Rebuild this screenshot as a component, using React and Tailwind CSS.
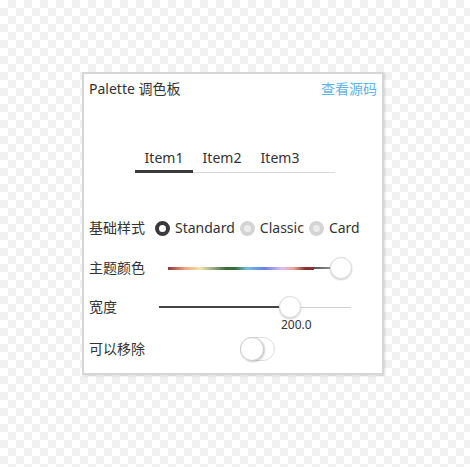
const FONT = { fontFamily: '"Noto Sans", "Noto Sans CJK SC", sans-serif' };

function Radio({ checked, label }) {
    return (
        <label className="flex items-center gap-[5px]">
            {checked ? (
                <span className="h-[15px] w-[15px] rounded-full border-[4px] border-[#3a3a3a] bg-white" />
            ) : (
                <span className="h-[15px] w-[15px] rounded-full border-[4px] border-[#d4d4d4] bg-[#ececec]" />
            )}
            <span>{label}</span>
        </label>
    );
}

export default function App() {
    return (
        <div
            className="h-[467px] w-[470px] bg-white bg-[length:16px_16px] pl-[82px] pt-[72px] text-[14px] text-[#333]"
            style={{
                ...FONT,
                backgroundImage:
                    "linear-gradient(45deg,#f1f1f1 25%,transparent 25%,transparent 75%,#f1f1f1 75%),linear-gradient(45deg,#f1f1f1 25%,transparent 25%,transparent 75%,#f1f1f1 75%)",
                backgroundPosition: "0 0, 8px 8px",
            }}
        >
            <div className="h-[303px] w-[302px] border-2 border-[#d6d6d6] bg-white shadow-[1px_1px_2px_rgba(0,0,0,0.15)]">
                <div className="flex items-center justify-between px-[5px] pt-[5px] leading-[20px]">
                    <span>Palette 调色板</span>
                    <span className="text-[#5fb4ea]">查看源码</span>
                </div>

                <div className="mt-[49px] ml-[51px] w-[200px] border-b border-[#d8d8d8]">
                    <div className="flex">
                        <div className="w-[58px] pb-[2px] text-center leading-[20px]">Item1</div>
                        <div className="w-[58px] pb-[2px] text-center leading-[20px]">Item2</div>
                        <div className="w-[58px] pb-[2px] text-center leading-[20px]">Item3</div>
                    </div>
                    <div className="-mb-px h-[3px] w-[58px] bg-[#3a3a3a]" />
                </div>

                <div className="mt-[45px] flex items-center gap-[10px] px-[5px] leading-[20px]">
                    <span>基础样式</span>
                    <div className="flex items-center gap-[5px]">
                        <Radio checked label="Standard" />
                        <Radio label="Classic" />
                        <Radio label="Card" />
                    </div>
                </div>

                <div className="mt-[19px] flex items-center px-[5px] leading-[20px]">
                    <span className="w-[79px]">主题颜色</span>
                    <div className="relative flex h-[22px] w-[182px] items-center">
                        <div
                            className="h-[3px] w-[146px]"
                            style={{
                                background:
                                    "linear-gradient(90deg,#8b3a3a 0%,#f4a582 12%,#f3e6a6 22%,#9fb08c 30%,#3b6b36 40%,#3b6b36 46%,#6ec1e4 54%,#6b7de8 66%,#d9bff2 78%,#f0a090 86%,#8b3030 94%,#8b3030 100%)",
                            }}
                        />
                        <div className="h-[2px] flex-1 bg-gradient-to-r from-[#555] to-[#d8d8d8]" />
                        <div className="absolute left-[162px] top-0 h-[22px] w-[22px] rounded-full border border-[#ddd] bg-white shadow-[0_1px_2px_rgba(0,0,0,0.2)]" />
                    </div>
                </div>

                <div className="mt-[17px] flex items-center px-[5px] leading-[20px]">
                    <span className="w-[70px]">宽度</span>
                    <div className="relative flex h-[22px] w-[192px] items-center">
                        <div className="h-[2px] w-[130px] bg-[#444]" />
                        <div className="h-[1px] flex-1 bg-[#d0d0d0]" />
                        <div className="absolute left-[120px] top-0 h-[22px] w-[22px] rounded-full border border-[#ddd] bg-white shadow-[0_1px_2px_rgba(0,0,0,0.2)]" />
                    </div>
                </div>
                <div className="ml-[197px] text-[12px] leading-[14px]">200.0</div>

                <div className="mt-[5px] flex items-center px-[5px] leading-[20px]">
                    <span className="w-[151px]">可以移除</span>
                    <div className="relative h-[24px] w-[35px] rounded-full border border-[#ddd] bg-white">
                        <div className="absolute -left-px -top-px h-[24px] w-[24px] rounded-full border border-[#ccc] bg-white shadow-[1px_1px_2px_rgba(0,0,0,0.2)]" />
                    </div>
                </div>
            </div>
        </div>
    );
}
